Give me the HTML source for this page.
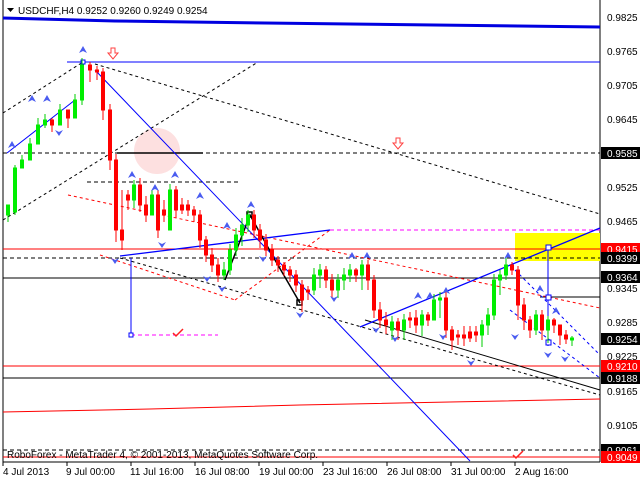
<!DOCTYPE html><html><head><style>
body{margin:0;background:#fff;width:640px;height:480px;overflow:hidden;font-family:"Liberation Sans",sans-serif}
svg text{font-family:"Liberation Sans",sans-serif;font-size:10px}
</style></head><body>
<svg width="640" height="480" xmlns="http://www.w3.org/2000/svg">
<rect width="640" height="480" fill="#fff"/>
<line x1="3" y1="0" x2="3" y2="462" stroke="#000"/>
<line x1="600" y1="0" x2="600" y2="462" stroke="#000"/>
<line x1="3" y1="462" x2="600" y2="462" stroke="#000"/>
<rect x="515" y="233" width="85" height="28" fill="#ffff00"/>
<circle cx="157" cy="151" r="23" fill="#fde0e0"/>
<polyline points="3,18 40,19 115,21 190,22 265,23 600,27" fill="none" stroke="#0000e0" stroke-width="3"/>
<line x1="67" y1="62" x2="600" y2="62" stroke="#0000ff"/>
<line x1="3" y1="153" x2="600" y2="153" stroke="#000" stroke-dasharray="4,3"/>
<line x1="117" y1="153" x2="203" y2="153" stroke="#000" stroke-width="1.5"/>
<line x1="87" y1="182" x2="240" y2="182" stroke="#000" stroke-dasharray="4,3"/>
<line x1="3" y1="249" x2="600" y2="249" stroke="#ff0000"/>
<line x1="3" y1="258" x2="600" y2="258" stroke="#000" stroke-dasharray="4,3"/>
<line x1="3" y1="278" x2="600" y2="278" stroke="#000"/>
<line x1="540" y1="297" x2="600" y2="297" stroke="#000"/>
<line x1="3" y1="366" x2="600" y2="366" stroke="#ff0000"/>
<line x1="3" y1="378" x2="600" y2="378" stroke="#000"/>
<polyline points="3,412 150,409 300,405 450,402 600,399" fill="none" stroke="#ff0000"/>
<line x1="3" y1="450" x2="600" y2="450" stroke="#000" stroke-dasharray="4,3"/>
<line x1="3" y1="457" x2="600" y2="457" stroke="#ff0000"/>
<line x1="330" y1="230" x2="600" y2="230" stroke="#ff00ff" stroke-dasharray="4,3"/>
<line x1="131" y1="335" x2="218" y2="335" stroke="#ff00ff" stroke-dasharray="4,3"/>
<line x1="3" y1="113" x2="83" y2="62" stroke="#000" stroke-dasharray="3,3"/>
<line x1="3" y1="220" x2="258" y2="62" stroke="#000" stroke-dasharray="3,3"/>
<line x1="95" y1="64" x2="600" y2="214" stroke="#000" stroke-dasharray="3,3"/>
<line x1="120" y1="258" x2="600" y2="395" stroke="#000" stroke-dasharray="3,3"/>
<line x1="365" y1="320" x2="600" y2="390" stroke="#000"/>
<line x1="68" y1="195" x2="600" y2="308" stroke="#ff0000" stroke-dasharray="3,3"/>
<line x1="100" y1="255" x2="235" y2="300" stroke="#ff0000" stroke-dasharray="3,3"/>
<line x1="235" y1="300" x2="330" y2="230" stroke="#ff0000" stroke-dasharray="3,3"/>
<line x1="95" y1="70" x2="470" y2="461" stroke="#0000ff"/>
<line x1="7" y1="153" x2="75" y2="100" stroke="#0000ff"/>
<line x1="120" y1="256" x2="330" y2="230" stroke="#0000ff" stroke-width="1.3"/>
<line x1="360" y1="327" x2="600" y2="228" stroke="#0000ff" stroke-width="1.3"/>
<line x1="131" y1="258" x2="131" y2="335" stroke="#0000ff"/>
<line x1="548" y1="248" x2="548" y2="346" stroke="#0000ff"/>
<line x1="515" y1="270" x2="600" y2="355" stroke="#0000ff" stroke-dasharray="3,3"/>
<line x1="510" y1="310" x2="600" y2="378" stroke="#0000ff" stroke-dasharray="3,3"/>
<polyline points="225,280 250,215 275,260 300,303" fill="none" stroke="#000" stroke-width="1.5"/>
<rect x="247" y="212" width="5" height="5" fill="none" stroke="#000" stroke-width="1.5"/>
<rect x="297" y="300" width="5" height="5" fill="none" stroke="#000" stroke-width="1.5"/>
<rect x="546" y="245" width="5" height="5" fill="#fff" stroke="#0000ff"/>
<rect x="546" y="295" width="5" height="5" fill="#fff" stroke="#0000ff"/>
<rect x="546" y="340" width="5" height="5" fill="#fff" stroke="#0000ff"/>
<rect x="129" y="333" width="4" height="4" fill="#fff" stroke="#0000ff"/>
<rect x="81" y="60" width="4" height="4" fill="#fff" stroke="#0000ff"/>
<g stroke-width="1">
<path stroke="#00cc00" d="M8 222V205M15 215V165M22 168V155M30 152V138M38 133V118M45 128V114M60 118V104M75 106V94M82 105V58M134 208V180M152 203V190M170 198V184M224 280V262M230 275V244M236 256V228M242 246V218M248 232V210M314 295V268M320 288V264M338 298V274M344 290V268M350 282V264M362 290V260M392 340V316M404 340V314M422 336V310M434 318V294M440 318V292M482 347V320M488 335V308M494 320V274M500 295V270M506 280V258M536 335V310M548 343V316M572 346V336"/>
<path stroke="#ff0000" d="M52 132V118M68 128V112M90 82V62M97 80V66M103 120V68M110 170V104M116 242V154M122 250V190M128 210V190M140 212V178M146 222V196M158 238V190M164 222V200M176 218V186M182 214V198M188 216V200M194 222V206M200 248V210M206 262V236M212 272V248M218 282V258M254 238V210M260 248V224M266 256V234M272 266V244M278 272V256M284 276V262M290 282V266M296 292V270M302 312V280M308 300V286M326 288V266M332 298V274M356 282V268M368 290V260M374 318V275M380 328V302M386 334V312M398 340V318M410 328V312M416 333V310M428 326V312M446 338V292M452 350V326M458 345V330M464 346V326M470 342V326M476 342V326M512 275V262M518 320V266M524 330V298M530 338V316M542 340V310M554 333V318M560 345V326M566 344V330"/>
</g>
<g fill="#00ee00" stroke="#00ee00" stroke-width="1">
<rect x="6.5" y="205" width="3" height="10"/><rect x="13.5" y="168" width="3" height="44"/><rect x="20.5" y="160" width="3" height="8"/><rect x="28.5" y="144" width="3" height="16"/><rect x="36.5" y="125" width="3" height="19"/><rect x="43.5" y="120" width="3" height="5"/><rect x="58.5" y="110" width="3" height="15"/><rect x="73.5" y="100" width="3" height="18"/><rect x="80.5" y="65" width="3" height="35"/><rect x="132.5" y="185" width="3" height="15"/><rect x="150.5" y="195" width="3" height="20"/><rect x="168.5" y="190" width="3" height="40"/><rect x="222.5" y="270" width="3" height="5"/><rect x="228.5" y="250" width="3" height="20"/><rect x="234.5" y="235" width="3" height="15"/><rect x="240.5" y="225" width="3" height="10"/><rect x="246.5" y="215" width="3" height="10"/><rect x="312.5" y="275" width="3" height="15"/><rect x="318.5" y="270" width="3" height="5"/><rect x="336.5" y="280" width="3" height="10"/><rect x="342.5" y="275" width="3" height="5"/><rect x="348.5" y="270" width="3" height="5"/><rect x="360.5" y="265" width="3" height="10"/><rect x="390.5" y="322" width="3" height="8"/><rect x="402.5" y="320" width="3" height="10"/><rect x="420.5" y="315" width="3" height="10"/><rect x="432.5" y="300" width="3" height="20"/><rect x="438.5" y="298" width="3" height="2"/><rect x="480.5" y="325" width="3" height="10"/><rect x="486.5" y="315" width="3" height="10"/><rect x="492.5" y="280" width="3" height="35"/><rect x="498.5" y="275" width="3" height="5"/><rect x="504.5" y="265" width="3" height="10"/><rect x="534.5" y="315" width="3" height="15"/><rect x="546.5" y="320" width="3" height="10"/><rect x="570.5" y="338" width="3" height="2"/>
</g>
<g fill="#ff0000" stroke="#ff0000" stroke-width="1">
<rect x="50.5" y="120" width="3" height="5"/><rect x="66.5" y="110" width="3" height="8"/><rect x="88.5" y="65" width="3" height="5"/><rect x="95.5" y="70" width="3" height="2"/><rect x="101.5" y="72" width="3" height="38"/><rect x="108.5" y="110" width="3" height="50"/><rect x="114.5" y="160" width="3" height="70"/><rect x="120.5" y="230" width="3" height="10"/><rect x="126.5" y="195" width="3" height="5"/><rect x="138.5" y="185" width="3" height="20"/><rect x="144.5" y="205" width="3" height="10"/><rect x="156.5" y="195" width="3" height="35"/><rect x="162.5" y="210" width="3" height="5"/><rect x="174.5" y="190" width="3" height="20"/><rect x="180.5" y="205" width="3" height="5"/><rect x="186.5" y="205" width="3" height="5"/><rect x="192.5" y="210" width="3" height="5"/><rect x="198.5" y="215" width="3" height="25"/><rect x="204.5" y="240" width="3" height="15"/><rect x="210.5" y="255" width="3" height="10"/><rect x="216.5" y="265" width="3" height="10"/><rect x="252.5" y="215" width="3" height="15"/><rect x="258.5" y="230" width="3" height="10"/><rect x="264.5" y="240" width="3" height="10"/><rect x="270.5" y="250" width="3" height="10"/><rect x="276.5" y="260" width="3" height="5"/><rect x="282.5" y="265" width="3" height="5"/><rect x="288.5" y="270" width="3" height="5"/><rect x="294.5" y="275" width="3" height="10"/><rect x="300.5" y="285" width="3" height="15"/><rect x="306.5" y="290" width="3" height="2"/><rect x="324.5" y="270" width="3" height="10"/><rect x="330.5" y="280" width="3" height="10"/><rect x="354.5" y="270" width="3" height="5"/><rect x="366.5" y="265" width="3" height="15"/><rect x="372.5" y="280" width="3" height="30"/><rect x="378.5" y="310" width="3" height="10"/><rect x="384.5" y="320" width="3" height="5"/><rect x="396.5" y="322" width="3" height="8"/><rect x="408.5" y="318" width="3" height="2"/><rect x="414.5" y="318" width="3" height="7"/><rect x="426.5" y="315" width="3" height="5"/><rect x="444.5" y="298" width="3" height="32"/><rect x="450.5" y="330" width="3" height="10"/><rect x="456.5" y="335" width="3" height="2"/><rect x="462.5" y="335" width="3" height="3"/><rect x="468.5" y="332" width="3" height="6"/><rect x="474.5" y="332" width="3" height="3"/><rect x="510.5" y="265" width="3" height="5"/><rect x="516.5" y="270" width="3" height="35"/><rect x="522.5" y="305" width="3" height="15"/><rect x="528.5" y="320" width="3" height="10"/><rect x="540.5" y="315" width="3" height="15"/><rect x="552.5" y="320" width="3" height="5"/><rect x="558.5" y="325" width="3" height="10"/><rect x="564.5" y="335" width="3" height="4"/>
</g>
<g fill="#4a5cf0">
<path d="M83 46l-4 7 4-2 4 2z"/><path d="M32 95l-4 7 4-2 4 2z"/><path d="M47 95l-4 7 4-2 4 2z"/><path d="M12 141l-4 7 4-2 4 2z"/><path d="M132 171l-4 7 4-2 4 2z"/><path d="M155 184l-4 7 4-2 4 2z"/><path d="M175 171l-4 7 4-2 4 2z"/><path d="M200 192l-4 7 4-2 4 2z"/><path d="M227 222l-4 7 4-2 4 2z"/><path d="M251 201l-4 7 4-2 4 2z"/><path d="M352 252l-4 7 4-2 4 2z"/><path d="M367 252l-4 7 4-2 4 2z"/><path d="M418 292l-4 7 4-2 4 2z"/><path d="M430 292l-4 7 4-2 4 2z"/><path d="M446 287l-4 7 4-2 4 2z"/><path d="M508 252l-4 7 4-2 4 2z"/><path d="M540 285l-4 7 4-2 4 2z"/><path d="M556 307l-4 7 4-2 4 2z"/>
<path d="M59 136l-4-6 4 2 4-2z"/><path d="M115 264l-4-6 4 2 4-2z"/><path d="M162 248l-4-6 4 2 4-2z"/><path d="M207 282l-4-6 4 2 4-2z"/><path d="M222 292l-4-6 4 2 4-2z"/><path d="M300 318l-4-6 4 2 4-2z"/><path d="M263 262l-4-6 4 2 4-2z"/><path d="M376 333l-4-6 4 2 4-2z"/><path d="M395 342l-4-6 4 2 4-2z"/><path d="M443 340l-4-6 4 2 4-2z"/><path d="M471 366l-4-6 4 2 4-2z"/><path d="M515 340l-4-6 4 2 4-2z"/><path d="M548 358l-4-6 4 2 4-2z"/><path d="M565 362l-4-6 4 2 4-2z"/><path d="M334 302l-4-6 4 2 4-2z"/>
</g>
<path d="M111 48h4v5h3l-5 6-5-6h3z" fill="#fff" stroke="#ff4040"/>
<path d="M396 138h4v5h3l-5 6-5-6h3z" fill="#fff" stroke="#ff4040"/>
<path d="M173 333l3 3 7-7" fill="none" stroke="#ff2020" stroke-width="1.5"/>
<path d="M513 455l3 3 7-7" fill="none" stroke="#ff2020" stroke-width="1.5"/>
<path d="M7 8h7l-3.5 4z" fill="#000"/>
<text x="18" y="14" font-size="10.5">USDCHF,H4  0.9252 0.9260 0.9249 0.9254</text>
<text x="7" y="458" fill="#000">RoboForex - MetaTrader 4, © 2001-2013, MetaQuotes Software Corp.</text>
<g fill="#000">
<text x="607" y="21">0.9825</text><text x="607" y="55">0.9765</text><text x="607" y="89">0.9705</text><text x="607" y="123">0.9645</text><text x="607" y="191">0.9525</text><text x="607" y="225">0.9465</text><text x="607" y="292">0.9345</text><text x="607" y="326">0.9285</text><text x="607" y="360">0.9225</text><text x="607" y="395">0.9165</text><text x="607" y="429">0.9105</text>
</g>
<g>
<rect x="601" y="147" width="39" height="12" fill="#000"/><text x="607" y="157" fill="#fff">0.9585</text>
<rect x="601" y="243" width="39" height="12" fill="#ff0000"/><text x="607" y="253" fill="#fff">0.9415</text>
<rect x="601" y="252" width="39" height="12" fill="#000"/><text x="607" y="262" fill="#fff">0.9399</text>
<rect x="601" y="271" width="39" height="12" fill="#000"/><text x="607" y="281" fill="#fff">0.9364</text>
<rect x="601" y="333" width="39" height="12" fill="#000"/><text x="607" y="343" fill="#fff">0.9254</text>
<rect x="601" y="360" width="39" height="12" fill="#ff0000"/><text x="607" y="370" fill="#fff">0.9210</text>
<rect x="601" y="372" width="39" height="12" fill="#000"/><text x="607" y="382" fill="#fff">0.9188</text>
<rect x="601" y="444" width="39" height="12" fill="#000"/><text x="607" y="454" fill="#fff">0.9061</text>
<rect x="601" y="451" width="39" height="12" fill="#ff0000"/><text x="607" y="461" fill="#fff">0.9049</text>
</g>
<g fill="#000">
<text x="3" y="475">4 Jul 2013</text><text x="66" y="475">9 Jul 00:00</text><text x="130" y="475">11 Jul 16:00</text><text x="195" y="475">16 Jul 08:00</text><text x="259" y="475">19 Jul 00:00</text><text x="323" y="475">23 Jul 16:00</text><text x="387" y="475">26 Jul 08:00</text><text x="451" y="475">31 Jul 00:00</text><text x="515" y="475">2 Aug 16:00</text>
</g>
<g stroke="#000"><line x1="3" y1="462" x2="3" y2="466"/><line x1="67" y1="462" x2="67" y2="466"/><line x1="131" y1="462" x2="131" y2="466"/><line x1="195" y1="462" x2="195" y2="466"/><line x1="259" y1="462" x2="259" y2="466"/><line x1="323" y1="462" x2="323" y2="466"/><line x1="387" y1="462" x2="387" y2="466"/><line x1="451" y1="462" x2="451" y2="466"/><line x1="515" y1="462" x2="515" y2="466"/></g>
</svg>
</body></html>
